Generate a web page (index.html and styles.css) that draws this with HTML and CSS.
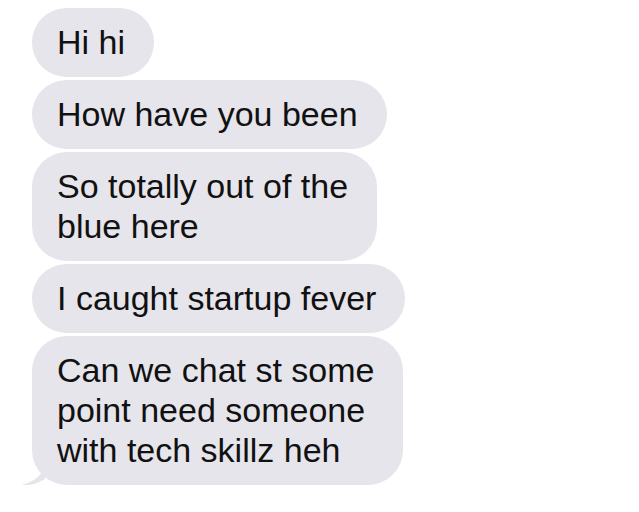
FILE: index.html
```html
<!DOCTYPE html>
<html lang="en">
<head>
    <meta charset="UTF-8">
    <meta name="viewport" content="width=device-width, initial-scale=1.0">
    <title>Messages</title>
    <link rel="stylesheet" href="styles.css">
</head>
<body>

<main class="thread">
    <div class="bubble">Hi hi</div>
    <div class="bubble">How have you been</div>
    <div class="bubble">So totally out of the<br>blue here</div>
    <div class="bubble">I caught startup fever</div>
    <div class="bubble last">
        Can we chat st some<br>point need someone<br>with tech skillz heh
        <svg class="tail" width="24" height="22" viewBox="0 0 24 22">
            <path d="M24 0 C22 10 14 18 0 21 C8 22 16 20 24 15 Z" fill="#e6e5eb"/>
        </svg>
    </div>
</main>

</body>
</html>
```

FILE: styles.css
```css
body {
    margin: 0;
    padding: 0;
    background-color: #fff;
    font-family: 'Liberation Sans', Arial, sans-serif;
    color: #111;
}

.thread {
    display: flex;
    flex-direction: column;
    align-items: flex-start;
    gap: 3px;
    padding: 8px 0 0 32px;
}

.bubble {
    position: relative;
    background-color: #e6e5eb;
    border-radius: 35px;
    padding: 14px 29px 15px 25px;
    font-size: 34px;
    line-height: 40px;
    white-space: nowrap;
}

.tail {
    position: absolute;
    left: -11px;
    bottom: -1px;
}
```
